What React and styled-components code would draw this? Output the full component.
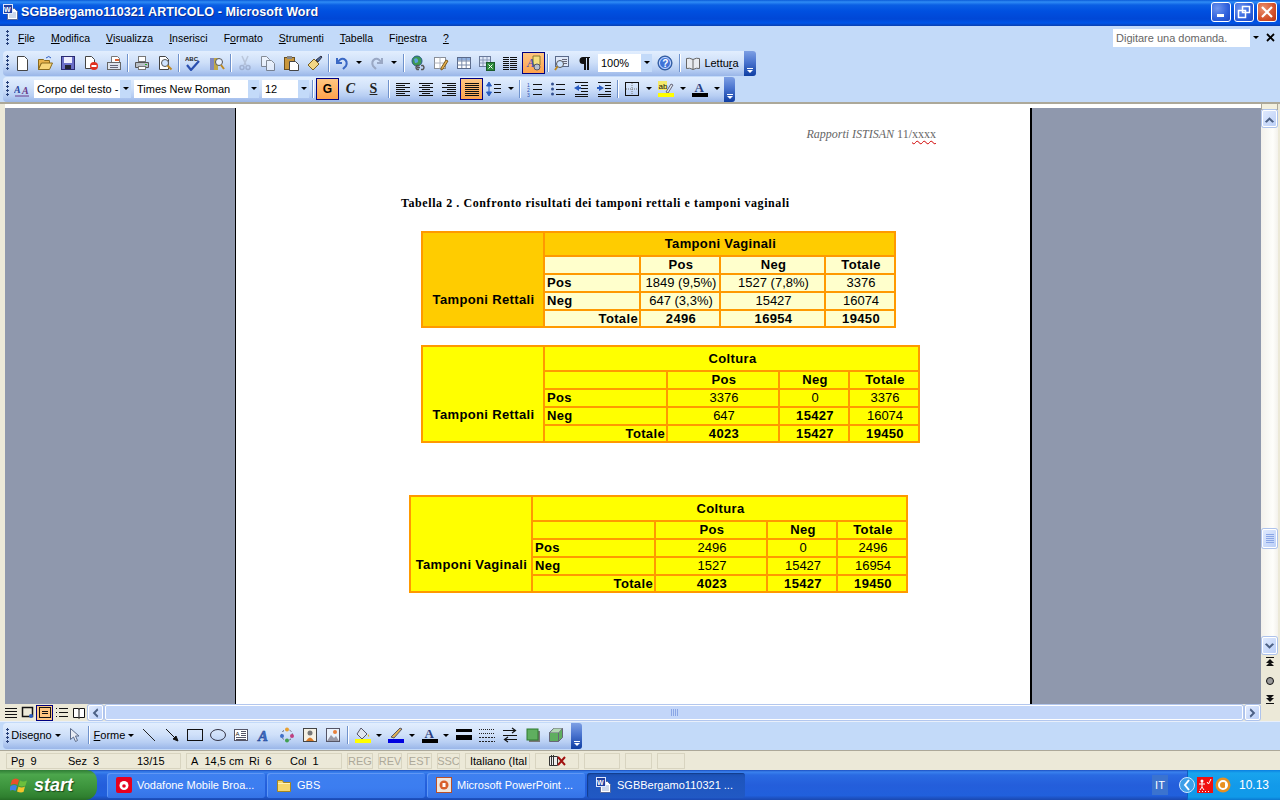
import styled, { createGlobalStyle } from "styled-components";

const GlobalStyle = createGlobalStyle`
  html, body { margin: 0; padding: 0; overflow: hidden; background: #c3daf9; }
  * { box-sizing: border-box; }
`;

const UI = `"Liberation Sans", "Noto Sans", sans-serif`;

const Screen = styled.div`
  width: 1280px;
  height: 800px;
  display: flex;
  flex-direction: column;
  overflow: hidden;
  font-family: ${UI};
  font-size: 11px;
  color: #000;
`;

/* ---------- title bar ---------- */
const TitleBar = styled.div`
  height: 26px;
  flex: none;
  display: flex;
  align-items: center;
  padding: 0 3px 2px 3px;
  background: linear-gradient(#0a5bd8 0, #2f8cf5 2px, #0a5fe4 5px, #0050e0 11px, #0047d6 19px, #0055e8 23px, #0a3fb0 26px);
`;
const TitleText = styled.div`
  margin-left: 2px;
  flex: 1;
  font-family: "Liberation Sans", sans-serif;
  font-weight: 700;
  font-size: 12.5px;
  letter-spacing: 0.1px;
  color: #fff;
  text-shadow: 1px 1px 0 #0a2f90;
`;
const WinButton = styled.div`
  width: 20px;
  height: 20px;
  margin-left: 3px;
  display: flex;
  align-items: center;
  justify-content: center;
  border: 1px solid #fff;
  border-radius: 3px;
  background: ${(p) =>
    p.$close
      ? "radial-gradient(circle at 30% 30%, #e9906e, #d4522b 60%, #b83513)"
      : "radial-gradient(circle at 30% 30%, #6f95ee, #2d5fdc 60%, #1e47c0)"};
`;

/* ---------- menu ---------- */
const MenuBand = styled.div`
  height: 25px;
  flex: none;
  display: flex;
  align-items: center;
  padding: 0 0 2px 3px;
  background: #c3daf9;
`;
const MenuItem = styled.div`
  padding: 0 8px;
  font-size: 10.5px;
  white-space: nowrap;
  u { text-underline-offset: 1px; }
`;
const Grip = styled.div`
  width: 4px;
  height: ${(p) => p.$h || 15}px;
  flex: none;
  margin-left: 3px;
  background: radial-gradient(circle at 1.5px 1.5px, #27417a 1.2px, transparent 1.3px) 0 0 / 4px 4px;
`;
const HelpBox = styled.div`
  margin-left: auto;
  width: 148px;
  height: 18px;
  display: flex;
  align-items: center;
  justify-content: space-between;
  background: #fff;
  color: #666;
  padding-left: 3px;
  font-size: 11px;
`;
const CloseDoc = styled.div`
  width: 19px;
  display: flex;
  justify-content: center;
`;

/* ---------- toolbars ---------- */
const Band = styled.div`
  height: ${(p) => p.$h}px;
  flex: none;
  display: flex;
  align-items: ${(p) => (p.$center ? "center" : "flex-start")};
  background: #c3daf9;
  padding-left: 3px;
`;
const Toolbar = styled.div`
  width: ${(p) => p.$w}px;
  height: ${(p) => p.$h || 25}px;
  display: flex;
  align-items: center;
  padding-bottom: 2px;
  border-radius: 4px 3px 3px 4px;
  background: linear-gradient(#e2eefe, #cfe0f9 45%, #b7cef3 75%, #9ab6e8);
  flex: none;
`;
const Tool = styled.div`
  width: ${(p) => p.$w || 23}px;
  height: 22px;
  flex: none;
  display: flex;
  align-items: center;
  justify-content: center;
  margin-left: ${(p) => p.$ml || 0}px;
  font-size: 11px;
  white-space: nowrap;
  ${(p) =>
    p.$active &&
    `border: 1px solid #000080; background: linear-gradient(#ffc681, #fea24c);`}
`;
const Sep = styled.div`
  width: ${(p) => p.$w || 5}px;
  height: 18px;
  flex: none;
  display: flex;
  justify-content: center;
  &::before {
    content: "";
    width: 1px;
    background: #6f92cc;
    box-shadow: 1px 0 0 #fff;
  }
`;
const Drop = styled.div`
  width: ${(p) => p.$w || 11}px;
  margin-right: ${(p) => p.$mr || 0}px;
  flex: none;
  display: flex;
  justify-content: center;
  &::before {
    content: "";
    border-left: 3px solid transparent;
    border-right: 3px solid transparent;
    border-top: 3px solid #000;
  }
`;
const EndCap = styled.div`
  width: ${(p) => p.$w || 11}px;
  align-self: stretch;
  margin: 0 0 -2px auto;
  flex: none;
  display: flex;
  flex-direction: column;
  align-items: center;
  justify-content: flex-end;
  padding-bottom: 3px;
  gap: 1px;
  border-radius: 0 3px 3px 0;
  background: linear-gradient(#7d9fe4, #4a74cf 45%, #0f3ea3);
  &::before { content: ""; width: 6px; height: 1px; background: #fff; }
  &::after {
    content: "";
    border-left: 3px solid transparent;
    border-right: 3px solid transparent;
    border-top: 3px solid #fff;
  }
`;
const Combo = styled.div`
  width: ${(p) => p.$w}px;
  height: 18px;
  flex: none;
  margin-left: ${(p) => p.$ml || 0}px;
  display: flex;
  align-items: center;
  background: #fff;
  padding-left: 3px;
  font-size: 11px;
  white-space: nowrap;
  overflow: hidden;
`;
const ComboArrow = styled.div`
  margin-left: auto;
  width: 11px;
  align-self: stretch;
  flex: none;
  display: flex;
  align-items: center;
  justify-content: center;
  background: #c3daf9;
  &::before {
    content: "";
    border-left: 3px solid transparent;
    border-right: 3px solid transparent;
    border-top: 3px solid #000;
  }
`;
const Ic = styled.svg.attrs({ viewBox: "0 0 16 16" })`
  width: 16px;
  height: 16px;
  flex: none;
  opacity: ${(p) => (p.$off ? 0.45 : 1)};
`;
const FormatLetter = styled.span`
  font-family: "Liberation Serif", serif;
  font-size: 14px;
  font-weight: 700;
  font-style: ${(p) => (p.$i ? "italic" : "normal")};
  text-decoration: ${(p) => (p.$u ? "underline" : "none")};
  color: ${(p) => p.$c || "#222"};
`;
const BoldLetter = styled.span`
  font-family: "Liberation Sans", sans-serif;
  font-size: 12px;
  font-weight: 700;
`;
const ArrowInline = styled.span`
  margin-left: 3px;
  border-left: 3px solid transparent;
  border-right: 3px solid transparent;
  border-top: 3px solid #000;
`;

/* ---------- document ---------- */
const Rule = styled.div`
  height: 2px;
  flex: none;
  background: #aca899;
`;
const DocRow = styled.div`
  height: 600px;
  flex: none;
  display: flex;
  background: #ece9d8;
`;
const Workspace = styled.div`
  flex: 1;
  display: flex;
  flex-direction: column;
  padding-left: 5px;
`;
const TopGap = styled.div`
  height: 4px;
  flex: none;
  background: #fff;
`;
const DocCanvas = styled.div`
  flex: 1;
  display: flex;
  background: #8f98ad;
  padding-left: 230px;
`;
const Page = styled.div`
  width: 797px;
  background: #fff;
  border-left: 1px solid #000;
  border-right: 2px solid #000;
  padding-top: 19px;
`;
const RunningHead = styled.div`
  height: 16px;
  padding-right: 94px;
  text-align: right;
  font-family: "Liberation Serif", serif;
  font-size: 12px;
  color: #666;
  span { text-decoration: underline wavy #d00000 1px; text-underline-offset: 2px; }
`;
const Heading = styled.div`
  margin: 53px 0 0 165px;
  height: 16px;
  font-family: "Liberation Serif", serif;
  font-weight: 700;
  font-size: 12px;
  letter-spacing: 0.58px;
  white-space: nowrap;
`;
const DataTable = styled.table`
  table-layout: fixed;
  border-collapse: collapse;
  margin: ${(p) => p.$mt}px 0 0 ${(p) => p.$ml}px;
  width: ${(p) => p.$w}px;
  font-family: "Liberation Sans", sans-serif;
  font-size: 13px;
  border: 2px solid #ff9900;
  td {
    border: 2px solid #ff9900;
    padding: 0 1px 0 3px;
    height: 18px;
    line-height: 14px;
    white-space: nowrap;
    text-align: center;
    background: ${(p) => p.$cell};
  }
  td.side, td.top {
    background: ${(p) => p.$head};
    font-weight: 700;
    letter-spacing: 0.35px;
  }
  td.side { vertical-align: bottom; padding: 0 0 19px 1px; }
  td.top { height: ${(p) => p.$top}px; }
  td.b { font-weight: 700; letter-spacing: 0.35px; }
  td.l { text-align: left; padding-left: 2px; }
  td.r { text-align: right; }
  tr:last-child td { height: 17px; }
`;

/* ---------- scroll bars ---------- */
const VScroll = styled.div`
  width: 19px;
  flex: none;
  display: flex;
  flex-direction: column;
  align-items: flex-start;
  padding-right: 2px;
  background: #ece9d8;
`;
const Splitter = styled.div`
  width: 17px;
  height: 6px;
  flex: none;
  background: #f3f0df;
  border: 1px solid #aca899;
  border-top: 0;
`;
const VTrack = styled.div`
  width: 17px;
  flex: 1;
  display: flex;
  flex-direction: column;
  align-items: center;
  background: linear-gradient(90deg, #f3f1ec, #fefefb 70%, #f3f1ec);
`;
const ScrollBtn = styled.div`
  width: ${(p) => p.$w || 15}px;
  height: ${(p) => p.$h || 17}px;
  margin: ${(p) => p.$m || 0};
  flex: none;
  display: flex;
  align-items: center;
  justify-content: center;
  border: 1px solid #fff;
  border-radius: 2px;
  background: linear-gradient(135deg, #dfe9fd, #bcd0f8);
  box-shadow: 0 0 0 1px #aec3ec;
`;
const VThumb = styled(ScrollBtn)`
  flex-direction: column;
  gap: 1px;
  margin-top: 402px;
  height: 19px;
`;
const ThumbLine = styled.div`
  width: 8px;
  height: 1px;
  background: #8aa6e6;
`;
const BrowseStack = styled.div`
  height: 51px;
  flex: none;
  display: flex;
  flex-direction: column;
  align-items: center;
  justify-content: space-between;
  width: 17px;
  padding: 2px 0 0;
`;
const HScrollRow = styled.div`
  height: 17px;
  flex: none;
  display: flex;
  align-items: center;
  background: #ece9d8;
  padding-left: 2px;
`;
const ViewBtn = styled.div`
  width: 17px;
  height: 16px;
  flex: none;
  display: flex;
  align-items: center;
  justify-content: center;
  ${(p) => p.$active && `border: 1px solid #000080; background: #ffc681;`}
`;
const HTrack = styled.div`
  width: 1138px;
  height: 15px;
  flex: none;
  margin: 0 2px 0 2px;
  display: flex;
  align-items: center;
  justify-content: center;
  gap: 1px;
  border: 1px solid #fff;
  border-radius: 2px;
  background: #c3d6f9;
  box-shadow: 0 0 0 1px #b3c7ee;
`;
const GripLine = styled.div`
  width: 1px;
  height: 7px;
  background: #8aa6e6;
`;
const FootBand = styled.div`
  height: 1px;
  flex: none;
  background: #e8effb;
`;

/* ---------- status bar ---------- */
const StatusBar = styled.div`
  height: 20px;
  flex: none;
  display: flex;
  align-items: center;
  gap: 5px;
  padding: 1px 0 0 6px;
  background: #ece9d8;
  border-top: 1px solid #aca899;
`;
const StatusCell = styled.div`
  width: ${(p) => p.$w}px;
  height: 16px;
  flex: none;
  display: flex;
  align-items: center;
  justify-content: ${(p) => (p.$center ? "center" : "flex-start")};
  padding-left: ${(p) => (p.$center ? 0 : 4)}px;
  border: 1px solid #d8d4c0;
  color: ${(p) => (p.$dim ? "#aca899" : "#000")};
  font-size: 11px;
  white-space: nowrap;
  overflow: hidden;
`;
const StatusPart = styled.span`
  width: ${(p) => p.$w}px;
  flex: none;
`;

/* ---------- taskbar ---------- */
const Taskbar = styled.div`
  height: 30px;
  flex: none;
  display: flex;
  align-items: center;
  background: linear-gradient(#1c4fc0 0, #3a82ee 2px, #2a6ae2 5px, #245edb 50%, #2160dc 85%, #1a48b0);
`;
const StartButton = styled.div`
  width: 97px;
  height: 30px;
  flex: none;
  display: flex;
  align-items: center;
  gap: 4px;
  padding-left: 10px;
  border-radius: 0 10px 12px 0;
  background: linear-gradient(#2f7d35, #4ca64c 15%, #3b923b 60%, #2f7f2f 90%, #256d25);
  color: #fff;
  font-family: "Liberation Sans", sans-serif;
  font-size: 18px;
  font-style: italic;
  font-weight: 700;
  text-shadow: 1px 1px 1px #1b4a1b;
`;
const TaskButton = styled.div`
  width: 158px;
  height: 25px;
  flex: none;
  margin-left: ${(p) => p.$ml || 2}px;
  display: flex;
  align-items: center;
  gap: 5px;
  padding-left: 9px;
  border-radius: 3px;
  color: #fff;
  font-size: 11px;
  white-space: nowrap;
  background: ${(p) =>
    p.$active
      ? "linear-gradient(#1b4fb0, #1e55bd 20%, #2159c4)"
      : "linear-gradient(#3e80f0, #3c7df0 60%, #3573e6)"};
  box-shadow: ${(p) => (p.$active ? "inset 1px 1px 1px #133c8c" : "inset 1px 1px 0 #5f97f5")};
`;
const LangBox = styled.div`
  width: 16px;
  height: 20px;
  flex: none;
  margin-left: auto;
  margin-right: 19px;
  display: flex;
  align-items: center;
  justify-content: center;
  background: #3b73cf;
  color: #fff;
  font-size: 11px;
`;
const Tray = styled.div`
  width: 93px;
  height: 30px;
  flex: none;
  display: flex;
  align-items: center;
  gap: 2px;
  color: #fff;
  font-size: 12px;
  border-left: 1px solid #0f5fc0;
  background: linear-gradient(#0c7fe0 0, #18a4ee 3px, #129aea 50%, #109ae9 90%, #0b78d0);
`;
const TrayChevron = styled.svg.attrs({ width: 16, height: 20, viewBox: "0 0 16 20" })`
  flex: none;
  margin-left: -9px;
`;
const TrayClock = styled.span`
  margin-left: 6px;
`;

/* ---------- icons ---------- */
const Doc = ({ x = 3, y = 1, w = 10, h = 14, f = "#fff" }) => (
  <path d={`M${x}.5 ${y}.5h${w - 3}l3 3v${h - 3}h-${w}z`} fill={f} stroke="#444" />
);
const lines = (ys, x1, x2, c = "#111") => ys.map((y) => <path key={y} d={`M${x1} ${y}.5H${x2}`} stroke={c} />);

const icons = {
  newDoc: <Doc />,
  open: (
    <>
      <path d="M1.500 4.500h5l1 1h5v3H4l-2.500 6z" fill="#e8b34c" stroke="#8a6a1c" />
      <path d="M1.500 14.500l3-6.500h11l-3 6.500z" fill="#f7d67a" stroke="#8a6a1c" />
      <path d="M9 3q3-3 5 0" fill="none" stroke="#2a5ac0" />
    </>
  ),
  save: (
    <>
      <rect x="1.500" y="1.500" width="13" height="13" fill="#6b6fc8" stroke="#2a2a70" />
      <rect x="4" y="2" width="8" height="6" fill="#eef" />
      <rect x="5" y="10" width="6" height="4" fill="#223" />
    </>
  ),
  permission: (
    <>
      <Doc x={2} w={9} h={12} />
      <circle cx="11" cy="11" r="4" fill="#e03020" />
      <rect x="8.500" y="10" width="5" height="2" fill="#fff" />
    </>
  ),
  email: (
    <>
      <path d="M5.500 1.500h6l2 2v5h-8z" fill="#fff" stroke="#777" />
      <rect x="1.500" y="7.500" width="13" height="7" fill="#dfe5ef" stroke="#666" />
      <rect x="9" y="4" width="4" height="2" fill="#e06030" />
      {lines([10, 12], 4, 12, "#667")}
    </>
  ),
  print: (
    <>
      <rect x="4.500" y="1.500" width="7" height="5" fill="#fff" stroke="#777" />
      <path d="M1.500 7.500h13v5h-13z" fill="#b9c0c8" stroke="#555" />
      <rect x="4.500" y="11.500" width="7" height="3" fill="#fff" stroke="#777" />
      <rect x="11" y="9" width="2" height="1" fill="#28b028" />
    </>
  ),
  preview: (
    <>
      <Doc x={2} w={9} h={13} />
      <circle cx="8" cy="8" r="3.500" fill="#cfe4ff" stroke="#555" />
      <path d="M10.500 10.500l4 4" stroke="#c08a20" strokeWidth="2" />
    </>
  ),
  spell: (
    <>
      <text x="0" y="6" fontSize="6" fontWeight="700" fontFamily="Liberation Sans" fill="#222">ABC</text>
      <path d="M2 10l4 5 8-9" fill="none" stroke="#2a4fb0" strokeWidth="2.200" />
    </>
  ),
  research: (
    <>
      <rect x="1" y="3" width="4" height="12" fill="#8088c0" />
      <rect x="5" y="3" width="4" height="12" fill="#c0a848" />
      <circle cx="10" cy="7" r="3.500" fill="#e8f0ff" stroke="#555" />
      <path d="M12 10l3 4" stroke="#c08a20" strokeWidth="2" />
    </>
  ),
  cut: (
    <>
      <path d="M5 1l4 9M11 1L7 10" stroke="#9aa3b5" strokeWidth="1.500" />
      <circle cx="5" cy="12.500" r="2" fill="none" stroke="#7e8aa8" strokeWidth="1.500" />
      <circle cx="11" cy="12.500" r="2" fill="none" stroke="#7e8aa8" strokeWidth="1.500" />
    </>
  ),
  copy: (
    <g opacity="0.55">
      <Doc x={1} w={8} h={10} />
      <Doc x={6} y={5} w={8} h={10} />
    </g>
  ),
  paste: (
    <>
      <rect x="1.500" y="2.500" width="10" height="12" fill="#c9973c" stroke="#6a5020" />
      <rect x="4" y="1" width="5" height="3" fill="#888" />
      <Doc x={6} y={6} w={9} h={9} />
    </>
  ),
  brush: (
    <>
      <path d="M1 10l6-6 5 5-6 6z" fill="#f2d685" stroke="#7a6020" />
      <path d="M9 5l5-4 1 1-4 5z" fill="#4c6a9c" stroke="#334" />
    </>
  ),
  undo: <path d="M3 3v5h5M3.500 8Q6 3 10 4q4 2 2 7l-3 3" fill="none" stroke="#3a68c4" strokeWidth="2" />,
  redo: <path d="M13 3v5H8M12.500 8Q10 3 6 4q-4 2-2 7l3 3" fill="none" stroke="#9aa8c4" strokeWidth="2" />,
  link: (
    <>
      <circle cx="7" cy="6" r="5" fill="#3e9a50" stroke="#2a5c8a" />
      <path d="M4 4q3-2 4 1t-3 3" fill="#5aa0e0" />
      <path d="M7 12.500h3M11 10.500h2q2 2 0 4h-2M9 10.500H7q-2 2 0 4h2" fill="none" stroke="#555" strokeWidth="1.300" />
    </>
  ),
  tableDraw: (
    <>
      <rect x="1.500" y="2.500" width="11" height="11" fill="#fff" stroke="#8a8f98" />
      <path d="M1.500 8h11M7 2.500v11" stroke="#b0b5c0" />
      <path d="M8 13l5-8 2 1-5 8-2 1z" fill="#e8b04c" stroke="#7a5a20" />
    </>
  ),
  table: (
    <>
      <rect x="1.500" y="2.500" width="13" height="11" fill="#fff" stroke="#5a6a8a" />
      <rect x="2" y="3" width="12" height="2.500" fill="#8fb0e0" />
      <path d="M1.500 6h13M1.500 10h13M5.800 3v10M10.200 3v10" stroke="#7a8aa8" />
    </>
  ),
  excel: (
    <>
      <rect x="0.500" y="1.500" width="11" height="10" fill="#dfe8f8" stroke="#6a7a9a" />
      <path d="M1 5h10M1 8h10M4 2v9M8 2v9" stroke="#8a9ab8" />
      <rect x="7.500" y="7.500" width="8" height="8" fill="#2a8a3a" stroke="#1a5a2a" />
      <path d="M9.500 9.500l4 4m0-4l-4 4" stroke="#fff" />
    </>
  ),
  columns: <>{lines([2, 4, 6, 8, 10, 12, 14], 1, 7)}{lines([2, 4, 6, 8, 10, 12, 14], 8, 15)}</>,
  drawing: (
    <>
      <path d="M7 1h7v9H7z" fill="#f5df80" stroke="#8a7a30" />
      <text x="1" y="12" fontSize="12" fontWeight="700" fontStyle="italic" fontFamily="Liberation Serif" fill="#4a55b0">A</text>
      <circle cx="11" cy="12" r="3" fill="#b8c0d0" stroke="#556" />
    </>
  ),
  docMap: (
    <>
      <rect x="1.500" y="1.500" width="13" height="10" fill="#dfe8f8" stroke="#5a6a8a" />
      {lines([4, 6, 8], 8, 13, "#667")}
      <circle cx="6" cy="9" r="3.500" fill="#cfe4ff" stroke="#555" />
      <path d="M3.500 11.500L1 15" stroke="#c08a20" strokeWidth="2" />
    </>
  ),
  pilcrow: <path d="M13 2H6a3.500 3.500 0 000 7h1v6h2V3h1v12h2V3h1z" fill="#111" />,
  help: (
    <>
      <circle cx="8" cy="8" r="7" fill="#3f73d8" stroke="#27508f" />
      <circle cx="8" cy="8" r="5.500" fill="none" stroke="#cfe0ff" />
      <text x="5.200" y="12" fontSize="10" fontWeight="700" fontFamily="Liberation Sans" fill="#fff">?</text>
    </>
  ),
  book: (
    <>
      <path d="M1.500 3.500q3-1 6.500 1 3.500-2 6.500-1v10q-3-1-6.500 1-3.500-2-6.500-1z" fill="#e8ebf0" stroke="#666" />
      <path d="M8 4.500v10" stroke="#666" />
    </>
  ),
  styles: (
    <>
      <text x="0" y="12" fontSize="10" fontStyle="italic" fontWeight="700" fontFamily="Liberation Serif" fill="#2a48a0">A</text>
      <text x="8" y="13" fontSize="10" fontStyle="italic" fontWeight="700" fontFamily="Liberation Serif" fill="#6a3a8a">A</text>
      <path d="M1 15h14" stroke="#6a3a8a" />
    </>
  ),
  alignL: <>{lines([2, 6, 10, 14], 1, 15)}{lines([4, 8, 12], 1, 10)}</>,
  alignC: <>{lines([2, 6, 10, 14], 1, 15)}{lines([4, 8, 12], 4, 12)}</>,
  alignR: <>{lines([2, 6, 10, 14], 1, 15)}{lines([4, 8, 12], 6, 15)}</>,
  justify: <>{lines([2, 4, 6, 8, 10, 12, 14], 1, 15)}</>,
  spacing: (
    <>
      <path d="M3 1L0.500 5h5zM3 15L0.500 11h5zM3 5v6" fill="#2a5cc0" stroke="#2a5cc0" />
      {lines([3, 7, 11], 8, 15)}
    </>
  ),
  numbered: (
    <>
      <text x="0" y="6" fontSize="5" fill="#2a4fb0" fontFamily="Liberation Sans">1</text>
      <text x="0" y="11" fontSize="5" fill="#2a4fb0" fontFamily="Liberation Sans">2</text>
      <text x="0" y="16" fontSize="5" fill="#2a4fb0" fontFamily="Liberation Sans">3</text>
      {lines([3, 8, 13], 6, 15)}
    </>
  ),
  bullets: (
    <>
      {[3, 8, 13].map((y) => <circle key={y} cx="2.500" cy={y} r="1.500" fill="#34508f" />)}
      {lines([3, 8, 13], 6, 15)}
    </>
  ),
  outdent: (
    <>
      {lines([1, 13, 15], 2, 15)}
      {lines([4, 7, 10], 8, 15)}
      <path d="M1 7l5-3v2h2v2H6v2z" fill="#2a5cc0" />
    </>
  ),
  indent: (
    <>
      {lines([1, 13, 15], 2, 15)}
      {lines([4, 7, 10], 9, 15)}
      <path d="M8 7L3 4v2H1v2h2v2z" fill="#2a5cc0" />
    </>
  ),
  borders: (
    <>
      <rect x="1.500" y="1.500" width="13" height="13" fill="none" stroke="#111" />
      <path d="M8 2v12M2 8h12" stroke="#777" strokeDasharray="1 1" />
    </>
  ),
  highlight: (
    <>
      <rect x="0" y="0" width="9" height="9" fill="#f4ea6a" />
      <text x="0.500" y="8" fontSize="8" fontFamily="Liberation Sans" fill="#111">ab</text>
      <path d="M8 11l5-8 2 1-5 8z" fill="#dfe5ef" stroke="#667" />
      <rect x="0" y="12" width="16" height="4" fill="#ffff00" />
    </>
  ),
  fontColor: (
    <>
      <text x="2.500" y="11" fontSize="13" fontWeight="700" fontFamily="Liberation Serif" fill="#2a3f80">A</text>
      <rect x="0" y="12" width="16" height="4" fill="#000" />
    </>
  ),
  line: <path d="M2 2l12 12" stroke="#222" />,
  arrow: <path d="M2 2l10 10M14 14l-5-2 3-3z" stroke="#111" fill="#111" />,
  rect: <rect x="0.500" y="2.500" width="15" height="11" fill="none" stroke="#111" />,
  ellipse: <ellipse cx="8" cy="8" rx="7.500" ry="5.500" fill="none" stroke="#334" />,
  textbox: (
    <>
      <rect x="1.500" y="2.500" width="13" height="11" fill="#fff" stroke="#556" />
      <text x="2.500" y="9" fontSize="6" fontFamily="Liberation Sans" fill="#111">A</text>
      {lines([4, 6, 8], 8, 13, "#556")}
      {lines([10, 12], 3, 13, "#556")}
    </>
  ),
  wordArt: <text x="2" y="14" fontSize="15" fontWeight="700" fontStyle="italic" fontFamily="Liberation Serif" fill="#3f70c8" stroke="#1c3f90" strokeWidth="0.500">A</text>,
  diagram: (
    <>
      <circle cx="8" cy="8" r="5.500" fill="none" stroke="#556" strokeDasharray="2 2" />
      <circle cx="8" cy="2.500" r="2" fill="#e8a030" />
      <circle cx="13" cy="9" r="2" fill="#c04080" />
      <circle cx="3" cy="9" r="2" fill="#4070c8" />
      <circle cx="8" cy="13.500" r="2" fill="#40a050" />
    </>
  ),
  clipArt: (
    <>
      <rect x="1.500" y="1.500" width="13" height="13" fill="#f4f0e4" stroke="#444" />
      <circle cx="8" cy="6" r="2.500" fill="#777" />
      <path d="M4 14q4-7 8 0z" fill="#d87a28" />
    </>
  ),
  picture: (
    <>
      <rect x="1.500" y="1.500" width="13" height="13" fill="#eaf2fc" stroke="#556" />
      <circle cx="10" cy="5" r="2" fill="#e8803a" />
      <path d="M2 14l4-6 3 3 2-2 3 5z" fill="#9a9aa8" />
    </>
  ),
  fill: (
    <>
      <path d="M6 1l6 6-5 5-5-5z" fill="#dfe5ef" stroke="#556" />
      <path d="M13 7q2 2 1 3-2-1-1-3z" fill="#e8c000" />
      <rect x="0" y="12" width="16" height="4" fill="#ffff00" />
    </>
  ),
  pen: (
    <>
      <path d="M3 10l9-9 2 1-8 9z" fill="#e0b050" stroke="#556" />
      <rect x="0" y="12" width="16" height="4" fill="#0000e0" />
    </>
  ),
  lineStyle: <><rect x="0" y="2" width="16" height="3" /><rect x="0" y="8" width="16" height="5" /></>,
  dash: <>{[2, 6, 10, 14].map((y, i) => <path key={y} d={`M0 ${y}.5H16`} stroke="#222" strokeDasharray={i < 2 ? "1 1" : "2 1"} />)}</>,
  arrowStyle: (
    <path d="M1 3.500h12M10 1l3.500 2.500L10 6M1 8.500h14M15 12.500H3M6 10l-3.500 2.500L6 15M1 12.500" fill="none" stroke="#111" strokeWidth="1.200" />
  ),
  shadow: <><rect x="4" y="4" width="11" height="11" fill="#777" /><rect x="2" y="2" width="11" height="11" fill="#5fae5f" stroke="#2f7a2f" /></>,
  cube: (
    <>
      <path d="M1.500 5.500l4-4h9v9l-4 4h-9z" fill="#5fae5f" stroke="#667" />
      <path d="M1.500 5.500h9v9M10.500 5.500l4-4" fill="none" stroke="#667" />
      <path d="M2 5.500l4-4h8l-3.500 4z" fill="#b4d8b4" />
    </>
  ),
  cursor: <path d="M4.500 1.500v11l3-2.500 2 4.500 2-1-2-4.500h3.500z" fill="#e8ecf4" stroke="#5a6a8a" />,
};
const Icon = ({ n, off }) => <Ic $off={off}>{icons[n]}</Ic>;

const Chevron = ({ d }) => {
  const paths = {
    up: "M2 10l5-5 5 5-2 1-3-3-3 3z",
    down: "M2 5l5 5 5-5-2-1-3 3-3-3z",
    left: "M9 2l-5 5 5 5 1-2-3-3 3-3z",
    right: "M5 2l5 5-5 5-1-2 3-3-3-3z",
  };
  return (
    <svg width="14" height="14" viewBox="0 0 14 14">
      <path d={paths[d]} fill="#4d6185" />
    </svg>
  );
};

const WordLogo = ({ size = 16 }) => (
  <svg width={size} height={size} viewBox="0 0 16 16" style={{ flex: "none" }}>
    <path d="M4.500 4.500h7l3 3v8h-10z" fill="#fff" stroke="#5a6a9a" />
    <path d="M6 9h7M6 11h7M6 13h7" stroke="#9ab0d8" />
    <rect x="0.500" y="0.500" width="9" height="9" fill="#1f3f9f" stroke="#dfe8ff" />
    <text x="1" y="8" fontSize="7" fontWeight="700" fontFamily="Liberation Sans" fill="#fff">W</text>
  </svg>
);
const XpFlag = () => (
  <svg width="20" height="20" viewBox="0 0 20 20" style={{ flex: "none" }}>
    <path d="M2 5q4-3 7 0l-1.500 5q-3-2-7 0z" fill="#e8502a" />
    <path d="M10 5.500q3 2 7 0l-1.500 5q-4 2-7 0z" fill="#6cbf3c" />
    <path d="M0.500 11q4-2 6.500 0L5.500 16q-3-2-6.500 0z" fill="#3f80e8" />
    <path d="M8.500 11.500q3 2 6.500 0L13.500 17q-3 1-6.500-.500z" fill="#f6c52c" />
  </svg>
);
const VodafoneIcon = () => (
  <svg width="16" height="16" viewBox="0 0 16 16" style={{ flex: "none" }}>
    <rect width="16" height="16" rx="2" fill="#e6001e" />
    <circle cx="8" cy="8.500" r="4.500" fill="#fff" />
    <circle cx="8" cy="9" r="1.800" fill="#e6001e" />
  </svg>
);
const FolderIcon = () => (
  <svg width="16" height="16" viewBox="0 0 16 16" style={{ flex: "none" }}>
    <path d="M1.500 3.500h5l1 2h7v9h-13z" fill="#f5d76e" stroke="#a5861f" />
    <path d="M2 6.500h12" stroke="#fff2b8" />
  </svg>
);
const PptIcon = () => (
  <svg width="16" height="16" viewBox="0 0 16 16" style={{ flex: "none" }}>
    <rect x="0.500" y="0.500" width="15" height="15" fill="#f0e6dc" stroke="#b8502a" />
    <circle cx="8" cy="8" r="4.500" fill="#d8602c" />
    <rect x="6.500" y="6" width="3" height="4" fill="#fff" />
  </svg>
);
const SpellBook = () => (
  <svg width="22" height="14" viewBox="0 0 22 14">
    <path d="M3.500 2.500h8v9h-8zM5.500 1v10M7.500 1v10" fill="#eee" stroke="#333" />
    <path d="M12 3l7 8m0-8l-7 8" stroke="#a01010" strokeWidth="2" />
  </svg>
);
const TrayRed = () => (
  <svg width="16" height="16" viewBox="0 0 16 16" style={{ flex: "none" }}>
    <rect width="16" height="16" fill="#f01010" />
    <circle cx="5" cy="4" r="1.500" fill="#fff" />
    <path d="M5 5v5M2 7h6M5 10l-2 3M5 10l2 3M10 5l1.500 2L14 2M2 14.500h1M5 14.500h1M8 14.500h1M11 14.500h1" stroke="#fff" fill="none" />
  </svg>
);
const TrayOrange = () => (
  <svg width="16" height="18" viewBox="0 0 16 18" style={{ flex: "none" }}>
    <circle cx="8" cy="9" r="7.500" fill="#e89020" />
    <circle cx="8" cy="9" r="4" fill="none" stroke="#fff" strokeWidth="2" />
    <path d="M11 7v5" stroke="#fff" strokeWidth="2" />
  </svg>
);

const ViewIcon = ({ n }) => {
  const draw = {
    normal: <>{lines([3, 6, 9, 12], 2, 14)}</>,
    web: <><rect x="2.500" y="2.500" width="10" height="9" fill="none" stroke="#111" strokeWidth="1.500" /><circle cx="11" cy="11" r="2" fill="#2a5cc0" /></>,
    print: <><rect x="2.500" y="2.500" width="11" height="10" fill="none" stroke="#111" />{lines([6, 8], 5, 11)}</>,
    outline: <>{lines([3, 7, 11], 5, 14)}<path d="M2 3.500h1M2 7.500h1M2 11.500h1" stroke="#111" /></>,
    read: <><path d="M2.500 3.500h5l.500 1 .500-1h5v9h-5l-.500 1-.500-1h-5z" fill="#fff" stroke="#111" /><path d="M8 4v9" stroke="#111" /></>,
  };
  return <Ic>{draw[n]}</Ic>;
};

/* ---------- data ---------- */
const menus = [
  ["F", "ile"], ["M", "odifica"], ["V", "isualizza"], ["I", "nserisci"], ["F", "o", "rmato"],
  ["S", "trumenti"], ["T", "abella"], ["Fi", "n", "estra"], ["?"],
];

const vaginali = {
  w: 473,
  top: 24,
  cols: [122, 96, 80, 105, 70],
  side: "Tamponi Rettali",
  title: "Tamponi Vaginali",
  rows: [
    ["Pos", ["1849 (9,5%)"], ["1527 (7,8%)"], ["3376"]],
    ["Neg", ["647 (3,3%)"], ["15427"], ["16074"]],
  ],
  total: ["2496", "16954", "19450"],
};
const rettali = {
  w: 497,
  top: 25,
  cols: [122, 123, 112, 70, 70],
  side: "Tamponi Rettali",
  title: "Coltura",
  rows: [
    ["Pos", ["3376"], ["0"], ["3376"]],
    ["Neg", ["647"], ["15427", true], ["16074"]],
  ],
  total: ["4023", "15427", "19450"],
};
const coltura = {
  w: 497,
  top: 25,
  cols: [122, 123, 112, 70, 70],
  side: "Tamponi Vaginali",
  title: "Coltura",
  rows: [
    ["Pos", ["2496"], ["0"], ["2496"]],
    ["Neg", ["1527"], ["15427"], ["16954"]],
  ],
  total: ["4023", "15427", "19450"],
};

function Results({ data, head, cell, mt, ml }) {
  return (
    <DataTable $head={head} $cell={cell} $mt={mt} $ml={ml} $w={data.w} $top={data.top}>
      <colgroup>
        {data.cols.map((c, i) => <col key={i} width={c} />)}
      </colgroup>
      <tbody>
        <tr>
          <td className="side" rowSpan={5}>{data.side}</td>
          <td className="top" colSpan={4}>{data.title}</td>
        </tr>
        <tr>
          <td></td>
          <td className="b">Pos</td>
          <td className="b">Neg</td>
          <td className="b">Totale</td>
        </tr>
        {data.rows.map((r) => (
          <tr key={r[0]}>
            <td className="b l">{r[0]}</td>
            {r.slice(1).map(([v, bold], i) => (
              <td key={i} className={bold ? "b" : ""}>{v}</td>
            ))}
          </tr>
        ))}
        <tr>
          <td className="b r">Totale</td>
          {data.total.map((v, i) => <td key={i} className="b">{v}</td>)}
        </tr>
      </tbody>
    </DataTable>
  );
}

export default function App() {
  return (
    <Screen>
      <GlobalStyle />
      <TitleBar>
        <WordLogo />
        <TitleText>SGBBergamo110321 ARTICOLO - Microsoft Word</TitleText>
        <WinButton>
          <svg width="12" height="12" viewBox="0 0 12 12"><rect x="2" y="8" width="7" height="3" fill="#fff" /></svg>
        </WinButton>
        <WinButton>
          <svg width="14" height="14" viewBox="0 0 14 14"><path d="M5.500 1.500h7v6h-7zM1.500 5.500h7v7h-7z" fill="none" stroke="#fff" strokeWidth="1.500" /></svg>
        </WinButton>
        <WinButton $close>
          <svg width="14" height="14" viewBox="0 0 14 14"><path d="M2 2l10 10M12 2L2 12" stroke="#fff" strokeWidth="2.200" /></svg>
        </WinButton>
      </TitleBar>

      <MenuBand>
        <Grip />
        {menus.map((m) =>
          m.length === 3 ? (
            <MenuItem key={m.join("")}>{m[0]}<u>{m[1]}</u>{m[2]}</MenuItem>
          ) : (
            <MenuItem key={m.join("")}><u>{m[0]}</u>{m[1]}</MenuItem>
          )
        )}
        <HelpBox>
          Digitare una domanda.
          <ComboArrow />
        </HelpBox>
        <CloseDoc>
          <svg width="10" height="10" viewBox="0 0 10 10"><path d="M1 1l7 7M8 1L1 8" stroke="#000" strokeWidth="1.800" /></svg>
        </CloseDoc>
      </MenuBand>

      <Band $h={26}>
        <Toolbar $w={753}>
          <Grip />
          <Tool><Icon n="newDoc" /></Tool>
          <Tool><Icon n="open" /></Tool>
          <Tool><Icon n="save" /></Tool>
          <Tool><Icon n="permission" /></Tool>
          <Tool><Icon n="email" /></Tool>
          <Sep />
          <Tool><Icon n="print" /></Tool>
          <Tool><Icon n="preview" /></Tool>
          <Sep />
          <Tool><Icon n="spell" /></Tool>
          <Tool $ml={1}><Icon n="research" /></Tool>
          <Sep />
          <Tool><Icon n="cut" off /></Tool>
          <Tool><Icon n="copy" /></Tool>
          <Tool><Icon n="paste" /></Tool>
          <Tool $ml={1}><Icon n="brush" /></Tool>
          <Sep />
          <Tool $w={22}><Icon n="undo" /></Tool>
          <Drop $mr={2} />
          <Tool $w={22}><Icon n="redo" /></Tool>
          <Drop $mr={1} />
          <Sep $w={6} />
          <Tool><Icon n="link" /></Tool>
          <Tool><Icon n="tableDraw" /></Tool>
          <Tool><Icon n="table" /></Tool>
          <Tool><Icon n="excel" /></Tool>
          <Tool><Icon n="columns" /></Tool>
          <Tool $active $ml={1}><Icon n="drawing" /></Tool>
          <Sep $w={5} />
          <Tool><Icon n="docMap" /></Tool>
          <Tool><Icon n="pilcrow" /></Tool>
          <Combo $w={54} $ml={2}>100%<ComboArrow /></Combo>
          <Tool $ml={1}><Icon n="help" /></Tool>
          <Sep $w={6} />
          <Tool $w={56} $ml={2}><Icon n="book" />&nbsp;Lettu<u>r</u>a</Tool>
          <EndCap $w={12} />
        </Toolbar>
      </Band>

      <Band $h={25}>
        <Toolbar $w={732}>
          <Grip />
          <Tool><Icon n="styles" /></Tool>
          <Combo $w={97} $ml={1}>Corpo del testo -<ComboArrow /></Combo>
          <Combo $w={125} $ml={3}>Times New Roman<ComboArrow /></Combo>
          <Combo $w={47} $ml={3}>12<ComboArrow /></Combo>
          <Sep $w={6} />
          <Tool $active $ml={1}><BoldLetter>G</BoldLetter></Tool>
          <Tool><FormatLetter $i>C</FormatLetter></Tool>
          <Tool><FormatLetter $u>S</FormatLetter></Tool>
          <Sep $w={6} />
          <Tool><Icon n="alignL" /></Tool>
          <Tool><Icon n="alignC" /></Tool>
          <Tool><Icon n="alignR" /></Tool>
          <Tool $active><Icon n="justify" /></Tool>
          <Tool $w={22}><Icon n="spacing" /></Tool>
          <Drop />
          <Sep $w={7} />
          <Tool><Icon n="numbered" /></Tool>
          <Tool><Icon n="bullets" /></Tool>
          <Tool><Icon n="outdent" /></Tool>
          <Tool><Icon n="indent" /></Tool>
          <Sep />
          <Tool $w={22} $ml={1}><Icon n="borders" /></Tool>
          <Drop $mr={1} />
          <Tool $w={22}><Icon n="highlight" /></Tool>
          <Drop $mr={1} />
          <Tool $w={22}><Icon n="fontColor" /></Tool>
          <Drop />
          <EndCap />
        </Toolbar>
      </Band>

      <Rule />

      <DocRow>
        <Workspace>
          <TopGap />
          <DocCanvas>
            <Page>
              <RunningHead><i>Rapporti ISTISAN</i> 11/<span>xxxx</span></RunningHead>
              <Heading>Tabella 2 . Confronto risultati dei tamponi rettali e tamponi vaginali</Heading>
              <Results data={vaginali} head="#ffcc00" cell="#ffffcc" mt={19} ml={185} />
              <Results data={rettali} head="#ffff00" cell="#ffff00" mt={17} ml={185} />
              <Results data={coltura} head="#ffff00" cell="#ffff00" mt={52} ml={173} />
            </Page>
          </DocCanvas>
        </Workspace>
        <VScroll>
          <Splitter />
          <VTrack>
            <ScrollBtn><Chevron d="up" /></ScrollBtn>
            <VThumb><ThumbLine /><ThumbLine /><ThumbLine /><ThumbLine /><ThumbLine /></VThumb>
            <ScrollBtn $m="89px 0 0"><Chevron d="down" /></ScrollBtn>
          </VTrack>
          <BrowseStack>
            <svg width="10" height="12" viewBox="0 0 10 12"><path d="M1 1h8v1H1zM5 3l4 4H1zM5 6l4 4H1z" fill="#111" /></svg>
            <svg width="10" height="12" viewBox="0 0 10 12"><circle cx="5" cy="6" r="3.500" fill="#999" stroke="#111" /></svg>
            <svg width="10" height="12" viewBox="0 0 10 12"><path d="M1 10h8v1H1zM5 9l4-4H1zM5 6l4-4H1z" fill="#111" /></svg>
          </BrowseStack>
        </VScroll>
      </DocRow>

      <HScrollRow>
        <ViewBtn><ViewIcon n="normal" /></ViewBtn>
        <ViewBtn><ViewIcon n="web" /></ViewBtn>
        <ViewBtn $active><ViewIcon n="print" /></ViewBtn>
        <ViewBtn><ViewIcon n="outline" /></ViewBtn>
        <ViewBtn><ViewIcon n="read" /></ViewBtn>
        <ScrollBtn $m="0 0 0 1px" $h={15}><Chevron d="left" /></ScrollBtn>
        <HTrack><GripLine /><GripLine /><GripLine /><GripLine /></HTrack>
        <ScrollBtn $h={15}><Chevron d="right" /></ScrollBtn>
      </HScrollRow>
      <FootBand />

      <Band $h={28} $center>
        <Toolbar $w={579} $h={26}>
          <Grip />
          <Tool $w={50} $ml={1}>Dise<u>g</u>no<ArrowInline /></Tool>
          <Tool $w={22} $ml={2}><Icon n="cursor" /></Tool>
          <Sep $w={6} />
          <Tool $w={44} $ml={1}><u>F</u>orme<ArrowInline /></Tool>
          <Tool $ml={1}><Icon n="line" /></Tool>
          <Tool><Icon n="arrow" /></Tool>
          <Tool><Icon n="rect" /></Tool>
          <Tool><Icon n="ellipse" /></Tool>
          <Tool><Icon n="textbox" /></Tool>
          <Tool><Icon n="wordArt" /></Tool>
          <Tool><Icon n="diagram" /></Tool>
          <Tool><Icon n="clipArt" /></Tool>
          <Tool><Icon n="picture" /></Tool>
          <Sep $w={7} />
          <Tool><Icon n="fill" /></Tool>
          <Drop $w={9} $mr={2} />
          <Tool $w={22}><Icon n="pen" /></Tool>
          <Drop $w={10} $mr={2} />
          <Tool $w={22}><Icon n="fontColor" /></Tool>
          <Drop $w={10} $mr={1} />
          <Tool><Icon n="lineStyle" /></Tool>
          <Tool><Icon n="dash" /></Tool>
          <Tool><Icon n="arrowStyle" /></Tool>
          <Tool><Icon n="shadow" /></Tool>
          <Tool><Icon n="cube" /></Tool>
          <EndCap />
        </Toolbar>
      </Band>

      <StatusBar>
        <StatusCell $w={175}>
          <StatusPart $w={57}>Pg&nbsp; 9</StatusPart>
          <StatusPart $w={69}>Sez&nbsp; 3</StatusPart>
          <StatusPart $w={40}>13/15</StatusPart>
        </StatusCell>
        <StatusCell $w={156}>
          <StatusPart $w={58}>A&nbsp; 14,5 cm</StatusPart>
          <StatusPart $w={41}>Ri&nbsp; 6</StatusPart>
          <StatusPart $w={40}>Col&nbsp; 1</StatusPart>
        </StatusCell>
        <StatusCell $w={26} $center $dim>REG</StatusCell>
        <StatusCell $w={24} $center $dim>REV</StatusCell>
        <StatusCell $w={25} $center $dim>EST</StatusCell>
        <StatusCell $w={23} $center $dim>SSC</StatusCell>
        <StatusCell $w={65}>Italiano (Ital</StatusCell>
        <StatusCell $w={44} $center><SpellBook /></StatusCell>
        <StatusCell $w={36} />
        <StatusCell $w={27} />
        <StatusCell $w={28} />
      </StatusBar>

      <Taskbar>
        <StartButton><XpFlag />start</StartButton>
        <TaskButton $ml={10}><VodafoneIcon />Vodafone Mobile Broa...</TaskButton>
        <TaskButton><FolderIcon />GBS</TaskButton>
        <TaskButton><PptIcon />Microsoft PowerPoint ...</TaskButton>
        <TaskButton $active><WordLogo />SGBBergamo110321 ...</TaskButton>
        <LangBox>IT</LangBox>
        <Tray>
          <TrayChevron>
            <circle cx="8" cy="10" r="7.500" fill="#3da0e8" stroke="#cfe8ff" />
            <path d="M10 5l-4 5 4 5" fill="none" stroke="#fff" strokeWidth="2" />
          </TrayChevron>
          <TrayRed />
          <TrayOrange />
          <TrayClock>10.13</TrayClock>
        </Tray>
      </Taskbar>
    </Screen>
  );
}
